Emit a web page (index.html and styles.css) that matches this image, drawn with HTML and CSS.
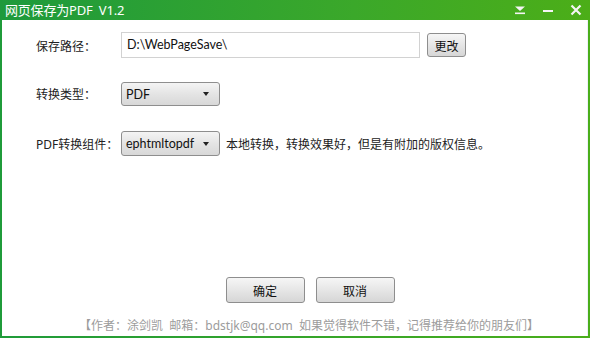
FILE: index.html
```html
<!DOCTYPE html>
<html lang="zh-CN">

<head>
  <meta charset="UTF-8" />
  <title>网页保存为PDF V1.2</title>
  <link rel="stylesheet" href="styles.css">
</head>

<body>
  <div class="window">
    <div class="titlebar">
      <span class="title">网页保存为PDF&nbsp;&nbsp;V1.2</span>
      <div class="win-btns">
        <span class="win-btn">
          <svg width="12" height="10" viewBox="0 0 12 10"><path d="M1 1.5h10L6 6z" fill="#f4f4f4"/><rect x="1" y="7.5" width="10" height="1.6" fill="#f4f4f4"/></svg>
        </span>
        <span class="win-btn">
          <svg width="12" height="10" viewBox="0 0 12 10"><rect x="1" y="5" width="10" height="2" fill="#f4f4f4"/></svg>
        </span>
        <span class="win-btn">
          <svg width="12" height="12" viewBox="0 0 12 12"><path d="M1.5 1.5l9 9M10.5 1.5l-9 9" stroke="#f4f4f4" stroke-width="2.2"/></svg>
        </span>
      </div>
    </div>

    <div class="content">
      <div class="row row-path">
        <span class="label">保存路径：</span>
        <div class="text-input">D:\WebPageSave\</div>
        <button class="btn btn-small">更改</button>
      </div>

      <div class="row row-type">
        <span class="label">转换类型：</span>
        <div class="select"><span>PDF</span><i class="caret"></i></div>
      </div>

      <div class="row row-engine">
        <span class="label">PDF转换组件：</span>
        <div class="select"><span>ephtmltopdf</span><i class="caret"></i></div>
        <span class="hint">本地转换，转换效果好，但是有附加的版权信息。</span>
      </div>

      <div class="actions">
        <button class="btn btn-big">确定</button>
        <button class="btn btn-big">取消</button>
      </div>

      <p class="footer">【作者：涂剑凯&nbsp;&nbsp;邮箱：bdstjk@qq.com&nbsp;&nbsp;如果觉得软件不错，记得推荐给你的朋友们】</p>
    </div>
  </div>
</body>

</html>
```

FILE: styles.css
```css
body {
  margin: 0;
  padding: 0;
  font-family: "Noto Sans", "Noto Sans CJK SC", sans-serif;
  font-size: 12px;
  color: #222;
  background: #fff;
}

.window {
  width: 590px;
  height: 338px;
  box-sizing: border-box;
  display: flex;
  flex-direction: column;
  border-left: 2px solid #1f9b3a;
  border-right: 2px solid #4aae1b;
  border-bottom: 2px solid #3aa527;
  border-image: linear-gradient(to right, #1f9b3a, #4aae1b) 1;
  border-top: 0;
}

.titlebar {
  height: 20px;
  margin: 0 -2px;
  display: flex;
  justify-content: space-between;
  align-items: center;
  background: linear-gradient(to right, #1e9a3c, #3ba82a 60%, #4cae18);
  color: #fff;
}

.title {
  padding-left: 5px;
  font-size: 13px;
  font-family: "Noto Sans", "Noto Sans CJK SC", sans-serif;
  line-height: 20px;
  letter-spacing: -0.2px;
}

.win-btns {
  display: flex;
  align-items: center;
}

.win-btn {
  width: 28px;
  display: flex;
  justify-content: center;
}

.content {
  flex: 1;
  display: flex;
  flex-direction: column;
  padding: 12px 0 0 34px;
  border-right: 1px solid #eef0f8;
}

.row {
  display: flex;
  align-items: center;
}

.label {
  width: 85px;
  flex-shrink: 0;
}

.text-input {
  width: 292px;
  height: 24px;
  line-height: 24px;
  border: 1px solid #d2d2d2;
  padding-left: 5px;
  box-sizing: content-box;
  font-family: "Lato", "Noto Sans", sans-serif;
  font-size: 12.5px;
  color: #111;
}

.btn {
  font-family: "Noto Sans CJK SC", sans-serif;
  font-size: 12px;
  color: #111;
  border: 1px solid #8e8e8e;
  border-radius: 3px;
  background: linear-gradient(#f6f6f6, #e6e6e6 50%, #d6d6d6);
  padding: 0;
}

.btn-small {
  width: 39px;
  height: 24px;
  margin-left: 7px;
}

.select {
  width: 99px;
  height: 23px;
  border: 1px solid #8e8e8e;
  border-radius: 3px;
  background: linear-gradient(#f4f4f4, #e4e4e4 50%, #d8d8d8);
  display: flex;
  align-items: center;
  justify-content: space-between;
  padding: 0 10px 0 4px;
  box-sizing: border-box;
  font-family: "Lato", "Noto Sans", sans-serif;
  font-size: 12.5px;
  color: #111;
}

.select .caret {
  width: 0;
  height: 0;
  border-left: 3px solid transparent;
  border-right: 3px solid transparent;
  border-top: 4px solid #222;
}

.row-path .label {
  padding-top: 1px;
}

.row-type {
  margin-top: 24px;
}

.row-type .select {
  height: 24px;
}

.row-engine {
  margin-top: 25px;
}

.row-engine .select {
  height: 25px;
}

.hint {
  margin-left: 6px;
}

.actions {
  display: flex;
  justify-content: center;
  gap: 11px;
  margin-top: 121px;
  padding-right: 3px;
}

.btn-big {
  width: 79px;
  height: 26px;
}

.footer {
  margin: 13px 0 0 0;
  padding-right: 5px;
  text-align: center;
  color: #9c9c9c;
  font-size: 12px;
  font-family: "Noto Sans", "Noto Sans CJK SC", sans-serif;
}
```
